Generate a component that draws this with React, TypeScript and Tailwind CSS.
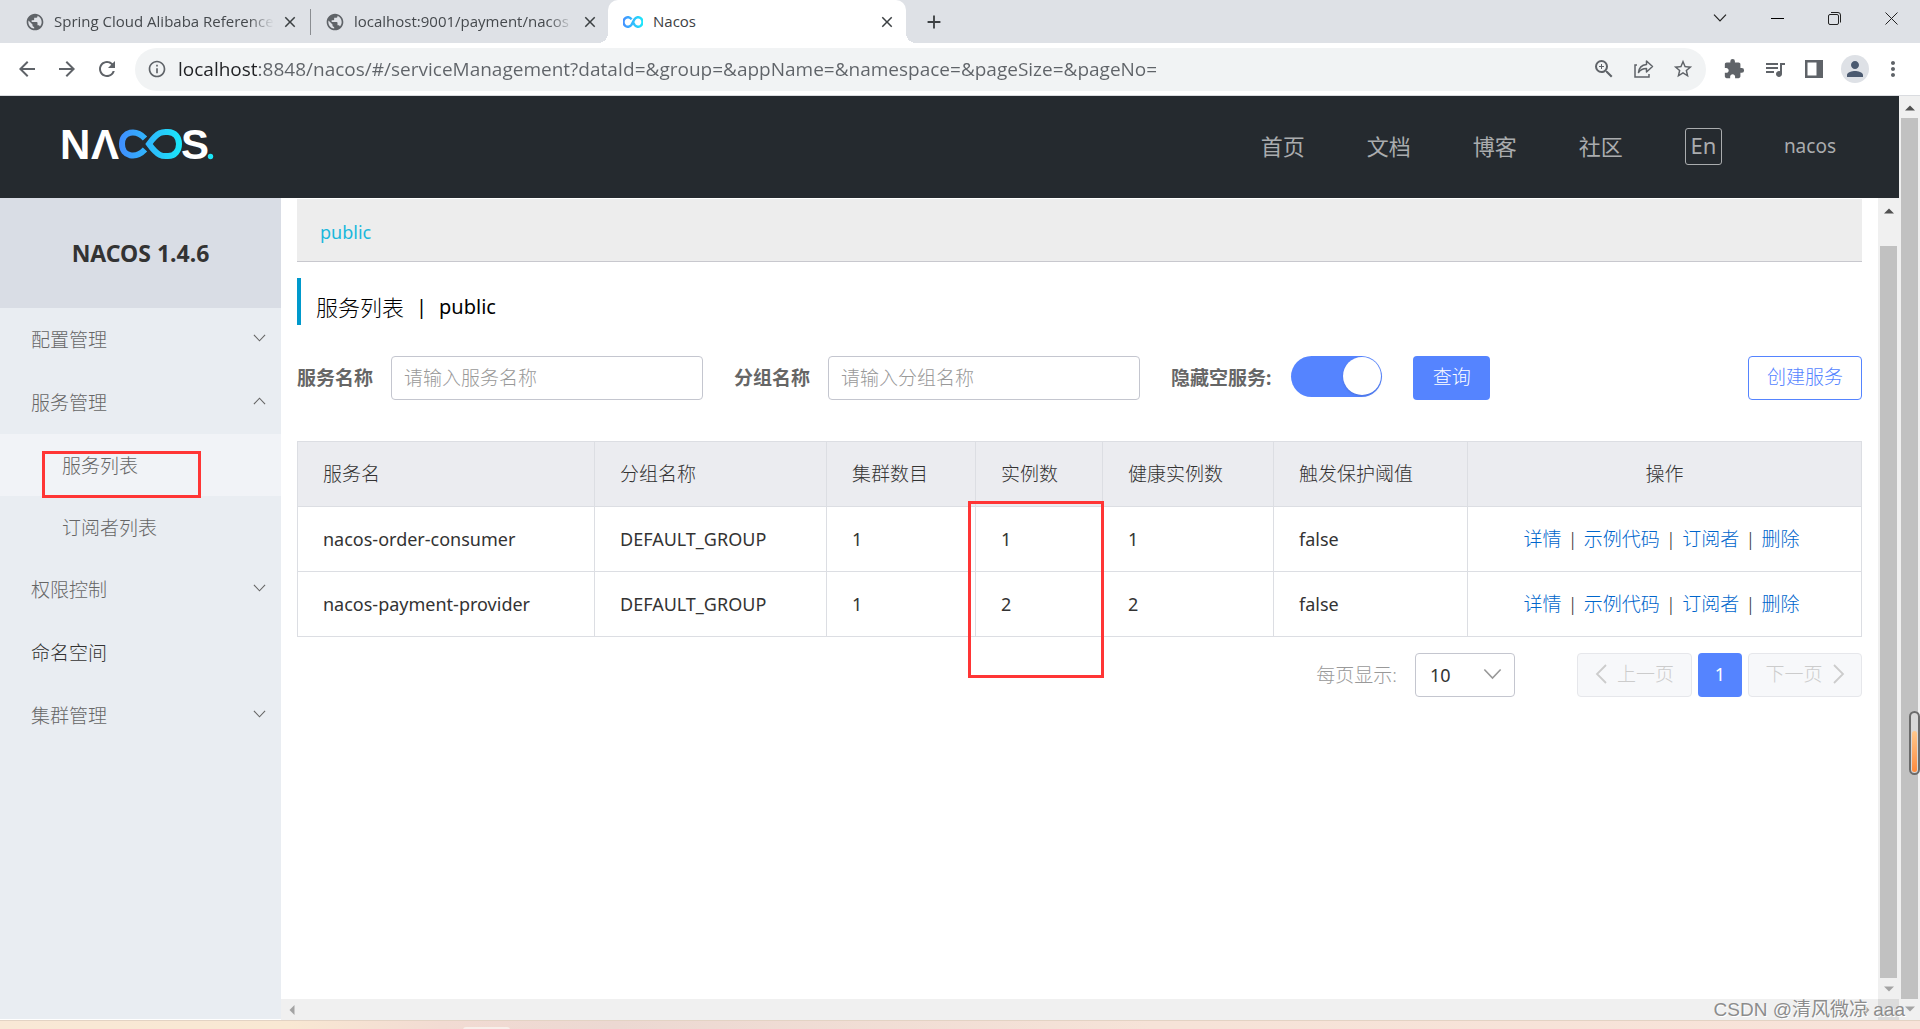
import React from 'react';
import {
  MdAdd,
  MdArrowBack,
  MdArrowForward,
  MdClose,
  MdExtension,
  MdInfoOutline,
  MdMoreVert,
  MdPerson,
  MdPublic,
  MdQueueMusic,
  MdRefresh,
  MdStarBorder,
  MdZoomIn,
} from 'react-icons/md';

const NAV_LINKS = ['首页', '文档', '博客', '社区'];

const MENU = [
  { label: '配置管理', arrow: 'down' },
  {
    label: '服务管理',
    arrow: 'up',
    children: [
      { label: '服务列表', active: true },
      { label: '订阅者列表', active: false },
    ],
  },
  { label: '权限控制', arrow: 'down' },
  { label: '命名空间' },
  { label: '集群管理', arrow: 'down' },
];

const COLUMNS = [
  { title: '服务名', width: 'w-[297px]' },
  { title: '分组名称', width: 'w-[232px]' },
  { title: '集群数目', width: 'w-[149px]' },
  { title: '实例数', width: 'w-[127px]' },
  { title: '健康实例数', width: 'w-[171px]' },
  { title: '触发保护阈值', width: 'w-[194px]' },
];

const SERVICES = [
  { name: 'nacos-order-consumer', group: 'DEFAULT_GROUP', clusters: 1, instances: 1, healthy: 1, threshold: 'false' },
  { name: 'nacos-payment-provider', group: 'DEFAULT_GROUP', clusters: 1, instances: 2, healthy: 2, threshold: 'false' },
];

const ACTIONS = ['详情', '示例代码', '订阅者', '删除'];

const Chevron = ({ dir, className }: { dir: string; className: string }) => (
  <svg viewBox="0 0 14 8" className={className} fill="none" stroke="currentColor" strokeWidth="1.2">
    <path d={dir === 'up' ? 'M1 7.3 7 1l6 6.3' : 'M1 .7 7 7l6-6.3'} />
  </svg>
);

const Triangle = ({ d, className }: { d: string; className: string }) => (
  <svg viewBox="0 0 10 10" className={`w-[10px] h-[10px] ${className}`} fill="currentColor">
    <path d={d} />
  </svg>
);

const UP = 'M0 7.5 5 2.5l5 5z';
const DOWN = 'M0 2.5h10l-5 5z';
const LEFT = 'M7.5 0v10l-5-5z';
const RIGHT = 'M2.5 0v10l5-5z';

const NacosMark = () => (
  <svg viewBox="0 0 20 12" className="w-5 h-3 shrink-0" fill="none" strokeWidth="2.4">
    <defs>
      <linearGradient id="mark" x1="0" x2="1">
        <stop offset="0" stopColor="#4592ff" />
        <stop offset="1" stopColor="#1ee6fa" />
      </linearGradient>
    </defs>
    <path stroke="url(#mark)" d="M8.6 3.4A4.4 4.8 0 1 0 8.6 8.6L11.4 3.4A4.4 4.8 0 1 1 11.4 8.6L10 6" />
  </svg>
);

const NacosLogo = () => (
  <svg viewBox="0 0 150 30" className="w-[150px] h-[30px] overflow-visible" role="img" aria-label="NACOS">
    <defs>
      <linearGradient id="loop" gradientUnits="userSpaceOnUse" x1="56" x2="118" y1="0" y2="0">
        <stop offset="0" stopColor="#418dff" />
        <stop offset="1" stopColor="#1ae6f8" />
      </linearGradient>
    </defs>
    <g className="font-bold" fontFamily="Liberation Sans" fontSize="42" fill="#fff">
      <text x="-3" y="30">N</text>
      <text x="28" y="30">Λ</text>
      <text x="118" y="30">S</text>
    </g>
    <g fill="none" stroke="url(#loop)" strokeWidth="6">
      <path d="M82 9.5C73 0 59 2 59 15s14 15 23 5.500" />
      <path d="M86 15c10-14 15-12 19-12 7 0 11 5.500 11 12s-4 12-11 12c-4 0-9 2-19-12z" />
    </g>
    <circle cx="147.500" cy="27.500" r="2.700" fill="#1ae6f8" />
  </svg>
);

const BrowserTab = ({ title }: { title: string }) => (
  <div className="flex items-center h-[43px] w-[299px] pl-[25px]">
    <MdPublic size={20} className="text-[#5f6368] shrink-0" />
    <span className="ml-[9px] w-[220px] shrink-0 overflow-hidden whitespace-nowrap text-[15px] text-[#45494d] [mask-image:linear-gradient(90deg,#000_88%,transparent)]">
      {title}
    </span>
    <button aria-label="关闭标签页" className="ml-auto text-[#3c4043]"><MdClose size={18} /></button>
  </div>
);

const BrowserChrome = () => (
  <div className="shrink-0 font-['Open_Sans','Noto_Sans_CJK_SC',sans-serif]">
    <div className="flex h-[43px] bg-[#dee1e6]">
      <BrowserTab title="Spring Cloud Alibaba Reference" />
      <div className="w-px h-[26px] mt-[9px] ml-[11px] -mr-[11px] bg-[#8a8d91]" />
      <BrowserTab title="localhost:9001/payment/nacos" />
      <div className="flex items-center h-[43px] w-[298px] pl-[15px] pr-2.5 ml-[9px] bg-white rounded-t-[10px] relative">
        <i className="absolute right-full bottom-0 w-2.5 h-2.5 bg-[radial-gradient(circle_at_0_0,transparent_10px,#fff_10px)]" />
        <i className="absolute left-full bottom-0 w-2.5 h-2.5 bg-[radial-gradient(circle_at_100%_0,transparent_10px,#fff_10px)]" />
        <NacosMark />
        <span className="ml-2.5 text-[15px] text-[#3c4043]">Nacos</span>
        <button aria-label="关闭标签页" className="ml-auto text-[#3c4043]"><MdClose size={18} /></button>
      </div>
      <button aria-label="新标签页" className="h-[43px] ml-[17px] text-[#3c4043]"><MdAdd size={22} /></button>
      <div className="ml-auto flex h-9 items-center gap-11 pr-[22px] text-[#222]">
        <button aria-label="搜索标签页"><Chevron dir="down" className="w-[14px] h-2" /></button>
        <button aria-label="最小化" className="w-[13px] h-px bg-black" />
        <button aria-label="还原">
          <svg width="13" height="13" viewBox="0 0 13 13" fill="none" stroke="currentColor">
            <rect x=".5" y="2.5" width="10" height="10" rx="1.5" />
            <path d="M3 .5h7a2.500 2.500 0 0 1 2.500 2.500v7.500" />
          </svg>
        </button>
        <button aria-label="关闭">
          <svg width="13" height="13" viewBox="0 0 13 13" stroke="currentColor"><path d="m.5.5 12 12m0-12-12 12" /></svg>
        </button>
      </div>
    </div>
    <div className="flex items-center h-[53px] border-b border-[#dadce0] px-[15px] text-[#5f6368]">
      <button aria-label="后退"><MdArrowBack size={24} /></button>
      <button aria-label="前进" className="ml-4"><MdArrowForward size={24} /></button>
      <button aria-label="刷新" className="ml-4"><MdRefresh size={24} /></button>
      <div className="flex items-center flex-1 h-[43px] ml-4 rounded-full bg-[#f1f3f4] pl-3 pr-3">
        <MdInfoOutline size={20} className="shrink-0" />
        <input
          aria-label="地址栏"
          defaultValue="localhost:8848/nacos/#/serviceManagement?dataId=&group=&appName=&namespace=&pageSize=&pageNo="
          className="flex-1 min-w-0 ml-[11px] text-[19px] outline-none text-transparent bg-clip-text bg-[linear-gradient(90deg,#202124_80px,#5f6368_80px)]"
        />
        <div className="flex items-center gap-[18px]">
          <button aria-label="缩放"><MdZoomIn size={24} /></button>
          <button aria-label="分享">
            <svg width="20" height="20" viewBox="0 0 20 20" fill="none" stroke="currentColor" strokeWidth="1.500">
              <path d="M3 6H1v12h14v-3" />
              <path strokeLinejoin="round" d="M12.500 2 18.500 7.500l-6 5.500v-3.500c-3.500 0-6 1-8 4 .5-5 3.500-7.500 8-8z" />
            </svg>
          </button>
          <button aria-label="收藏"><MdStarBorder size={22} /></button>
        </div>
      </div>
      <div className="flex items-center gap-[18px] ml-[17px]">
        <button aria-label="扩展程序"><MdExtension size={22} /></button>
        <button aria-label="媒体控制"><MdQueueMusic size={24} /></button>
        <button aria-label="侧边栏">
          <svg width="18" height="18" viewBox="0 0 18 18" fill="currentColor" fillRule="evenodd">
            <path d="M0 0h18v18H0zM2.500 2.500v13h9v-13z" />
          </svg>
        </button>
        <button aria-label="用户" className="w-7 h-7 rounded-full bg-[#dee1e6] text-[#4b5a70] flex items-center justify-center"><MdPerson size={24} /></button>
        <button aria-label="更多" className="-ml-1.5"><MdMoreVert size={24} /></button>
      </div>
    </div>
  </div>
);

const Header = () => (
  <header className="flex items-center shrink-0 h-[102px] px-[63px] bg-[#252a2f]">
    <a href="#/" className="pb-1.5"><NacosLogo /></a>
    <nav className="ml-auto flex items-center gap-[62px] pb-0.5 text-[#aaacae]">
      {NAV_LINKS.map((item) => (
        <a key={item} href="#/" className="text-[22px]">{item}</a>
      ))}
      <button className="w-[37px] h-[37px] border border-[#aaacae] rounded-[3px] text-[22px] leading-[32px] pb-0.5">En</button>
      <a href="#/" className="text-[19px]">nacos</a>
    </nav>
  </header>
);

const Sidebar = () => (
  <aside className="flex flex-col shrink-0 w-[281px] mb-px bg-[#e9edf2] text-[19px]">
    <h1 className="flex items-center justify-center h-[110px] bg-[#d9dde5] text-[23px] font-bold text-[#333]">NACOS 1.4.6</h1>
    <ul className="font-light text-[#666]">
      {MENU.map((item) => (
        <li key={item.label}>
          <a href="#/" className={`flex items-center justify-between h-[63px] pl-[31px] pr-[15px] ${item.arrow ? '' : 'text-[#333]'}`}>
            <span className="pt-0.5">{item.label}</span>
            {item.arrow && <Chevron dir={item.arrow} className="w-[13px] h-2 mb-1" />}
          </a>
          {item.children && (
            <ul>
              {item.children.map((child) => (
                <li key={child.label} className={child.active ? 'relative bg-[#f1f3f7]' : ''}>
                  <a href="#/" className="flex items-center h-[62px] pl-[62px] pt-0.5">{child.label}</a>
                  {child.active && (
                    <div className="absolute left-[42px] top-[17px] w-[159px] h-[47px] border-[3px] border-[#ff3535]" />
                  )}
                </li>
              ))}
            </ul>
          )}
        </li>
      ))}
    </ul>
  </aside>
);

const SearchForm = () => (
  <form className="flex items-start mt-[31px] text-[19px] text-[#666]" onSubmit={(e) => e.preventDefault()}>
    <label htmlFor="service" className="font-bold leading-[44px]">服务名称</label>
    <input id="service" placeholder="请输入服务名称" className="w-[312px] h-[44px] ml-[18px] px-3 border border-[#c4c6cf] rounded-[4px] outline-none font-light placeholder:text-[#999]" />
    <label htmlFor="group" className="ml-[31px] font-bold leading-[44px]">分组名称</label>
    <input id="group" placeholder="请输入分组名称" className="w-[312px] h-[44px] ml-[18px] px-3 border border-[#c4c6cf] rounded-[4px] outline-none font-light placeholder:text-[#999]" />
    <label htmlFor="hideEmpty" className="ml-[31px] font-bold leading-[44px]">隐藏空服务:</label>
    <input
      id="hideEmpty"
      type="checkbox"
      role="switch"
      defaultChecked
      className="relative appearance-none w-[91px] h-[41px] ml-5 rounded-full bg-[#5584ff] before:absolute before:right-px before:top-px before:w-[38px] before:h-[38px] before:rounded-full before:bg-white before:shadow"
    />
    <button className="w-[77px] h-[44px] ml-[31px] pb-0.5 rounded-[4px] bg-[#5584ff] font-light text-white">查询</button>
    <button type="button" className="w-[114px] h-[44px] ml-auto pb-0.5 border border-[#5584ff] rounded-[4px] font-light text-[#5584ff]">创建服务</button>
  </form>
);

const ServiceTable = () => (
  <div className="relative mt-[41px]">
    <table className="w-full table-fixed border-collapse text-[18px] text-[#333]">
      <thead>
        <tr className="h-[65px] bg-[#ebecf0]">
          {COLUMNS.map((col) => (
            <th key={col.title} className={`${col.width} pl-[25px] border border-[#dcdee3] text-left text-[19px] font-light`}>{col.title}</th>
          ))}
          <th className="border border-[#dcdee3] text-[19px] font-light">操作</th>
        </tr>
      </thead>
      <tbody>
        {SERVICES.map((row) => (
          <tr key={row.name} className="h-[65px]">
            {Object.values(row).map((value, i) => (
              <td key={i} className="pl-[25px] border border-[#dcdee3]">{value}</td>
            ))}
            <td className="pr-1.5 border border-[#dcdee3] text-center text-[19px] font-light">
              {ACTIONS.map((action, i) => (
                <React.Fragment key={action}>
                  {i > 0 && <span className="mx-1.5">|</span>}
                  <a href="#/" className="text-[#0066cc]">{action}</a>
                </React.Fragment>
              ))}
            </td>
          </tr>
        ))}
      </tbody>
    </table>
    <div className="absolute left-[671px] top-[60px] w-[136px] h-[177px] border-[3px] border-[#ff3535]" />
  </div>
);

const Pagination = () => (
  <div className="flex items-center justify-end mt-4 text-[19px] text-[#999]">
    <label htmlFor="pageSize" className="font-light">每页显示:</label>
    <div className="relative ml-[18px] mr-[62px]">
      <select id="pageSize" className="block appearance-none w-[100px] h-[44px] pl-3.5 border border-[#c4c6cf] rounded-[4px] bg-white text-[18px] text-[#333]">
        <option>10</option>
      </select>
      <Chevron dir="down" className="absolute right-[13px] top-[14px] w-[19px] h-[14px] pointer-events-none" />
    </div>
    <div className="flex gap-1.5 text-[#ccc]">
      <button disabled className="flex items-center justify-center gap-2.5 w-[115px] h-[44px] pb-0.5 border border-[#e6e7eb] rounded-[4px] bg-[#f7f8fa] font-light">
        <svg viewBox="0 0 12 20" className="w-3 h-5" fill="none" stroke="currentColor" strokeWidth="1.800"><path d="m11 1-9 9 9 9" /></svg>
        上一页
      </button>
      <button className="w-[44px] h-[44px] pb-0.5 rounded-[4px] bg-[#5584ff] text-[18px] text-white">1</button>
      <button disabled className="flex items-center justify-center gap-2.5 w-[114px] h-[44px] pb-0.5 border border-[#e6e7eb] rounded-[4px] bg-[#f7f8fa] font-light">
        下一页
        <svg viewBox="0 0 12 20" className="w-3 h-5" fill="none" stroke="currentColor" strokeWidth="1.800"><path d="m1 1 9 9-9 9" /></svg>
      </button>
    </div>
  </div>
);

const ServiceList = () => (
  <main className="flex-1 min-h-0 px-4 pt-px bg-white">
    <div className="h-[63px] pl-[23px] leading-[66px] border-b border-[#c8c8ce] bg-[#ededed] text-[18px]">
      <a href="#/" className="text-[#1bb8dc]">public</a>
    </div>
    <h2 className="flex items-end gap-3 h-[47px] mt-4 pl-[15px] border-l-4 border-[#0099cc] text-[22px] leading-[36px] text-black">
      <span className="font-light">服务列表</span>
      <span className="text-[20px]">|</span>
      <span className="text-[20px]">public</span>
    </h2>
    <SearchForm />
    <ServiceTable />
    <Pagination />
  </main>
);

const App: React.FC = () => {
  return (
    <div className="relative flex flex-col h-screen overflow-hidden bg-white font-['Noto_Sans','Noto_Sans_CJK_SC',sans-serif]">
      <BrowserChrome />
      <div className="flex flex-1 min-h-0">
        <div className="flex flex-col flex-1 min-w-0">
          <Header />
          <div className="flex flex-1 min-h-0">
            <Sidebar />
            <div className="flex flex-col flex-1 min-w-0">
              <ServiceList />
              <div className="flex items-center justify-between shrink-0 h-[21px] px-1.5 bg-[#f0f0f0] text-[#a3a3a3]">
                <Triangle d={LEFT} className="" />
                <Triangle d={RIGHT} className="" />
              </div>
            </div>
            {/* 内层滚动条 */}
            <div className="flex flex-col items-center shrink-0 w-[21px] bg-[#f0f0f0]">
              <Triangle d={UP} className="mt-2 text-[#505050]" />
              <div className="flex-1 w-[17px] mt-[30px] mb-1.5 bg-[#c1c1c1]" />
              <Triangle d={DOWN} className="mb-[5px] text-[#a3a3a3]" />
              <div className="w-full h-[21px] bg-[#dcdcdc]" />
            </div>
          </div>
        </div>
        {/* 外层滚动条 */}
        <div className="flex flex-col items-center shrink-0 w-[21px] bg-[#f0f0f0]">
          <Triangle d={UP} className="mt-[7px] text-[#505050]" />
          <div className="flex-1 w-[17px] mt-[5px] mb-[5px] bg-[#c1c1c1]" />
          <Triangle d={DOWN} className="mb-1.5 text-[#a3a3a3]" />
        </div>
      </div>
      <div className="shrink-0 h-[9px] pl-[463px] pt-1.5 border-t border-[#e3d3c4] bg-[linear-gradient(90deg,#f9e8d6,#f9e8d3_15%,#f2dbd3_23%,#ecd8d2_32%,#f6e3d8_60%,#f8e3d9)]">
        <div className="w-[47px] h-[3px] rounded-t-sm bg-[#f8efea]" />
      </div>

      <div className="absolute right-0 bottom-[254px] w-[11px] h-[64px] p-px border-[2px] border-[#6b6b6b] rounded-full bg-[#d8d8d8] flex items-end">
        <div className="w-full h-[41px] rounded-full bg-linear-to-b from-[#ffc88c] to-[#ff8a3c]" />
      </div>
      <div className="absolute right-[15px] bottom-1.5 text-[19px] leading-[26px] text-[#8c8c8c] [text-shadow:1px_1px_0_#fff] font-['Liberation_Sans','Noto_Sans_CJK_SC',sans-serif]">
        CSDN @清风微凉 aaa
      </div>
    </div>
  );
};

export default App;
